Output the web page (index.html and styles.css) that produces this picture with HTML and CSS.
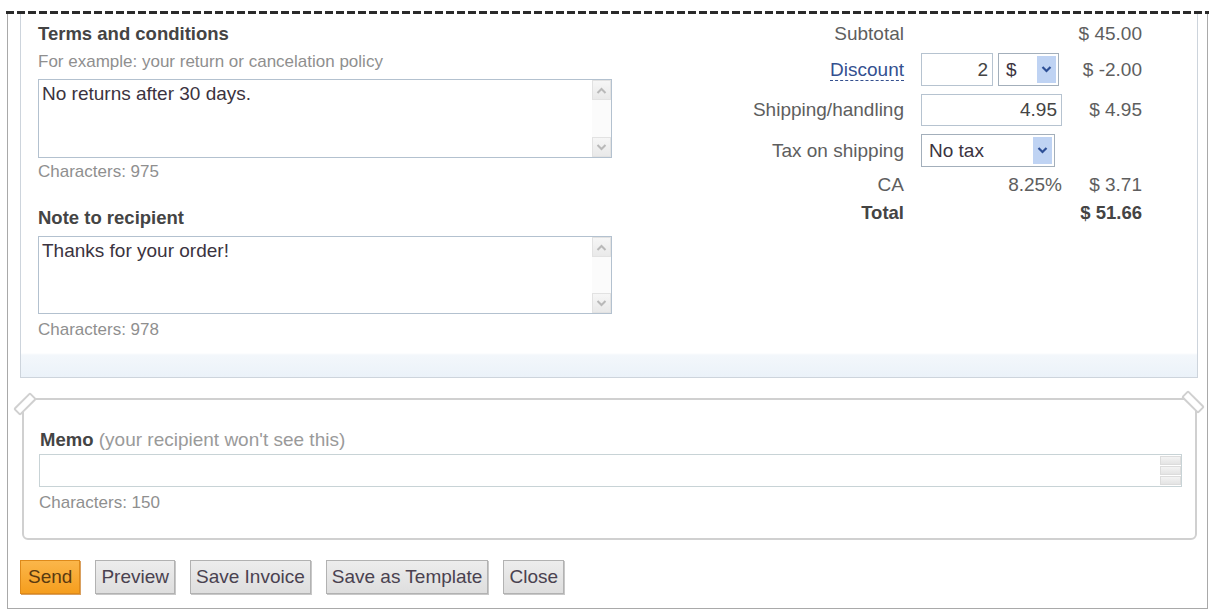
FILE: index.html
```html
<!DOCTYPE html>
<html lang="en">
<head>
<meta charset="utf-8">
<title>Invoice</title>
<link rel="stylesheet" href="styles.css">
</head>
<body>
<div class="page">
  <div class="dash"></div>
  <div class="frame">
    <div class="panel">
      <div class="left">
        <div class="heading">Terms and conditions</div>
        <div class="hint">For example: your return or cancelation policy</div>
        <div class="ta ta-terms">
          <div class="ta-text">No returns after 30 days.</div>
          <div class="sb">
            <div class="sb-btn"><svg width="11" height="7" viewBox="0 0 11 7"><polyline points="1.5,6 5.5,2 9.5,6" fill="none" stroke="#b9b9b9" stroke-width="2"/></svg></div>
            <div class="sb-btn"><svg width="11" height="7" viewBox="0 0 11 7"><polyline points="1.5,1 5.5,5 9.5,1" fill="none" stroke="#b9b9b9" stroke-width="2"/></svg></div>
          </div>
        </div>
        <div class="count">Characters: 975</div>
        <div class="heading heading-note">Note to recipient</div>
        <div class="ta ta-note">
          <div class="ta-text">Thanks for your order!</div>
          <div class="sb">
            <div class="sb-btn"><svg width="11" height="7" viewBox="0 0 11 7"><polyline points="1.5,6 5.5,2 9.5,6" fill="none" stroke="#b9b9b9" stroke-width="2"/></svg></div>
            <div class="sb-btn"><svg width="11" height="7" viewBox="0 0 11 7"><polyline points="1.5,1 5.5,5 9.5,1" fill="none" stroke="#b9b9b9" stroke-width="2"/></svg></div>
          </div>
        </div>
        <div class="count count-note">Characters: 978</div>
      </div>

      <div class="totals">
        <div class="lbl">Subtotal</div>
        <div class="ctl"></div>
        <div class="amt">$ 45.00</div>

        <div class="lbl"><span class="link">Discount</span></div>
        <div class="ctl ctl-discount">
          <div class="inp inp-disc">2</div>
          <div class="sel sel-cur"><span class="sel-text">$</span><span class="arrow"><svg width="11" height="7" viewBox="0 0 11 7"><polyline points="1.5,1 5.5,5 9.5,1" fill="none" stroke="#2d4f96" stroke-width="2.2"/></svg></span></div>
        </div>
        <div class="amt">$ -2.00</div>

        <div class="lbl">Shipping/handling</div>
        <div class="ctl"><div class="inp inp-ship">4.95</div></div>
        <div class="amt">$ 4.95</div>

        <div class="lbl">Tax on shipping</div>
        <div class="ctl"><div class="sel sel-tax"><span class="sel-text">No tax</span><span class="arrow"><svg width="11" height="7" viewBox="0 0 11 7"><polyline points="1.5,1 5.5,5 9.5,1" fill="none" stroke="#2d4f96" stroke-width="2.2"/></svg></span></div></div>
        <div class="amt"></div>

        <div class="lbl">CA</div>
        <div class="ctl ctl-rate">8.25%</div>
        <div class="amt">$ 3.71</div>

        <div class="lbl lbl-total">Total</div>
        <div class="ctl"></div>
        <div class="amt amt-total">$ 51.66</div>
      </div>
    </div>

    <div class="memo">
      <span class="notch notch-left"></span>
      <span class="notch notch-right"></span>
      <div class="memo-label"><b>Memo</b> (your recipient won't see this)</div>
      <div class="memo-input">
        <div class="spin"><span></span><span></span><span></span></div>
      </div>
      <div class="count">Characters: 150</div>
    </div>

    <div class="actions">
      <button class="btn btn-send">Send</button>
      <button class="btn">Preview</button>
      <button class="btn">Save Invoice</button>
      <button class="btn">Save as Template</button>
      <button class="btn">Close</button>
    </div>
  </div>
</div>
</body>
</html>
```

FILE: styles.css
```css
* { box-sizing: border-box; }

body {
  margin: 0;
  background: #fff;
  font-family: "Liberation Sans", Arial, sans-serif;
  color: #333;
}

.page { padding-top: 11px; }

.dash {
  height: 3px;
  margin-left: 6px;
  background: repeating-linear-gradient(to right, #2a2a2a 0 8px, transparent 8px 11px);
}

.frame {
  margin-left: 7px;
  width: 1201px;
  border: 1px solid #a9a9a9;
  border-top: none;
  padding: 0 9px 14px 12px;
}

/* top panel */
.panel {
  display: flex;
  border: 1px solid #cdd4dc;
  border-top: none;
  padding: 9px 0 37px 17px;
  background: linear-gradient(to bottom, #fff 0, #fff calc(100% - 24px), #f3f7fb calc(100% - 22px), #ebf2f9 100%);
}

.left { width: 574px; flex: none; }

.heading {
  font-size: 18.5px;
  font-weight: bold;
  line-height: 22px;
  color: #444;
}
.heading-note { margin-top: 25px; }

.hint {
  margin-top: 7px;
  font-size: 17px;
  line-height: 20px;
  color: #8f8f8f;
}

.count {
  margin-top: 4px;
  font-size: 17px;
  line-height: 20px;
  color: #8f8f8f;
}
.count-note { margin-top: 6px; }

.ta {
  display: flex;
  margin-top: 7px;
  height: 79px;
  border: 1px solid #b3c1cf;
  background: #fff;
}
.ta-note { height: 78px; }

.ta-text {
  flex: 1;
  padding: 3px 4px 0 3px;
  font-size: 19px;
  line-height: 22px;
  color: #3b3340;
}

.sb {
  width: 19px;
  display: flex;
  flex-direction: column;
  justify-content: space-between;
  background: #fbfbfb;
}
.sb-btn {
  height: 20px;
  display: flex;
  align-items: center;
  justify-content: center;
  background: linear-gradient(#f6f6f6, #e9e9e9);
  border: 1px solid #e2e2e2;
}

/* totals */
.totals {
  margin-left: 102px;
  display: grid;
  grid-template-columns: 207px 141px 80px;
  grid-template-rows: 22px 33px 32px 33px 20px 20px;
  row-gap: 8px;
  font-size: 19px;
  color: #5e5e5e;
  align-self: flex-start;
}

.lbl {
  padding-right: 17px;
  text-align: right;
  align-self: center;
  line-height: 22px;
}
.link {
  color: #34508f;
  text-decoration: underline dashed #34508f;
  text-decoration-thickness: 1px;
  text-underline-offset: 4px;
}
.lbl-total { font-weight: bold; color: #444; font-size: 18.5px; }

.ctl { display: flex; align-items: stretch; }
.ctl-discount { gap: 5px; }
.ctl-rate { justify-content: flex-end; align-items: center; line-height: 22px; }

.amt {
  text-align: right;
  align-self: center;
  line-height: 22px;
}
.amt-total { font-weight: bold; color: #444; font-size: 18.5px; }

.inp {
  border: 1px solid #b6c3d0;
  background: #fff;
  display: flex;
  align-items: center;
  justify-content: flex-end;
  padding-right: 4px;
  color: #444;
}
.inp-disc { width: 72px; }
.inp-ship { width: 141px; }

.sel {
  border: 1px solid #a3afbb;
  background: #fff;
  display: flex;
  align-items: stretch;
  justify-content: space-between;
  color: #3b3340;
  padding: 2px;
}
.sel-cur { width: 61px; }
.sel-tax { width: 134px; }
.sel-text { display: flex; align-items: center; padding-left: 5px; }
.arrow {
  width: 19px;
  background: #bfd3f3;
  display: flex;
  align-items: center;
  justify-content: center;
}

/* memo */
.memo {
  position: relative;
  margin: 20px 1px 0 2px;
  border: 2px solid #d0d0d0;
  border-radius: 6px;
  padding: 29px 13px 25px 15px;
}
.notch {
  position: absolute;
  width: 10px;
  height: 24px;
  border: 2px solid #d0d0d0;
  background: #fff;
  border-radius: 2px;
}
.notch-left { left: -4px; top: -8px; transform: rotate(45deg); }
.notch-right { right: -3px; top: -10px; transform: rotate(-45deg); }

.memo-label {
  font-size: 19px;
  line-height: 22px;
  color: #9a9a9a;
  padding-left: 1px;
}
.memo-label b { color: #444; font-size: 18.5px; }

.memo-input {
  margin-top: 3px;
  height: 33px;
  border: 1px solid #c8d3d6;
  display: flex;
  justify-content: flex-end;
  align-items: stretch;
}
.spin {
  width: 21px;
  display: flex;
  flex-direction: column;
  justify-content: space-between;
  padding: 1px 0;
}
.spin span {
  height: 9px;
  background: linear-gradient(#f3f3f3, #e4e4e4);
  border: 1px solid #dcdcdc;
}
.memo .count { margin-top: 6px; }

/* buttons */
.actions {
  display: flex;
  gap: 15px;
  margin-top: 20px;
}
.btn {
  height: 34px;
  padding: 0 5px;
  font-family: "Liberation Sans", Arial, sans-serif;
  font-size: 19px;
  color: #4a4250;
  background: linear-gradient(#ededed, #dedede);
  border: 1px solid #b2b2b2;
  box-shadow: 1px 1px 0 #c8c8c8;
}
.btn-send {
  padding: 0 7px;
  color: #5a3a10;
  background: linear-gradient(#fbb64a, #f59e1e);
  border: 1px solid #de8a1a;
  box-shadow: 1px 1px 0 #d9a060;
}
```
